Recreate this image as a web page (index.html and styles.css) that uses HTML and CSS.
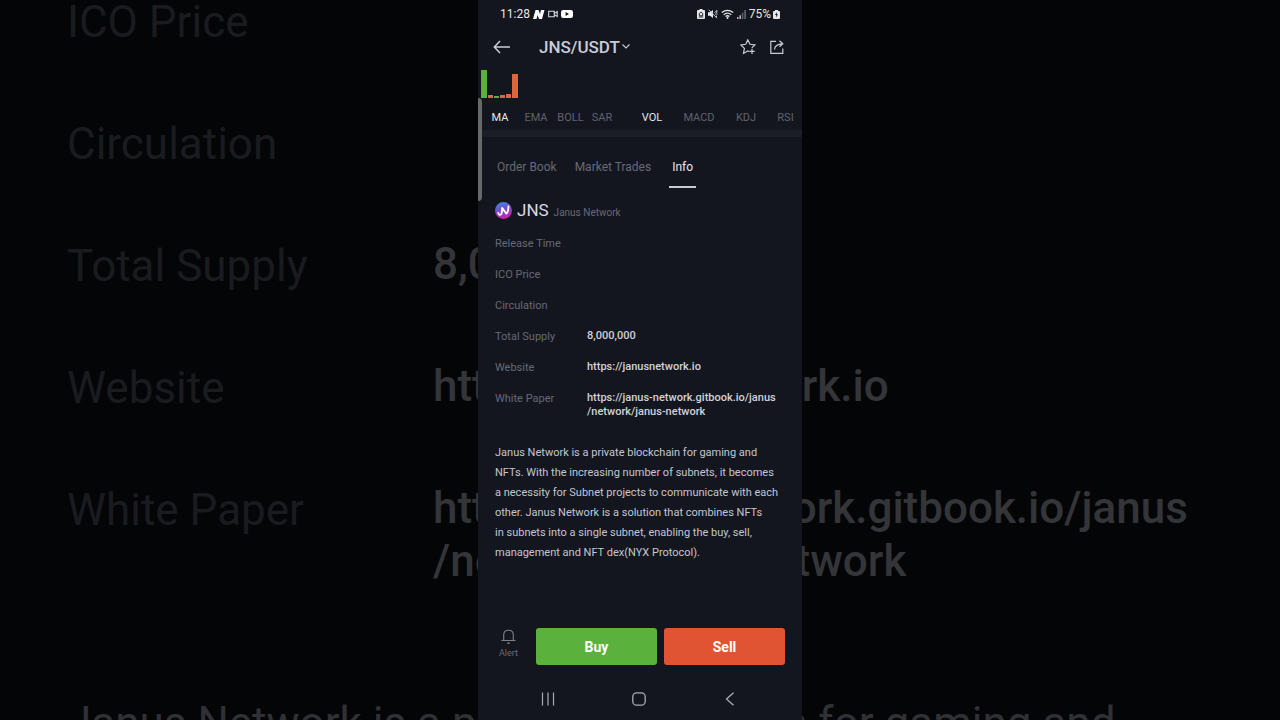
FILE: index.html
```html
<!DOCTYPE html>
<html lang="en">
<head>
  <meta charset="UTF-8">
  <meta name="viewport" content="width=device-width, initial-scale=1.0">
  <title>JNS/USDT</title>
  <link rel="stylesheet" href="styles.css">
</head>
<body>
  <!-- Enlarged backdrop behind the phone -->
  <div class="backdrop" aria-hidden="true">
    <div class="backdrop-row"><span>ICO Price</span></div>
    <div class="backdrop-row"><span>Circulation</span></div>
    <div class="backdrop-row"><span>Total Supply</span><b>8,000,000</b></div>
    <div class="backdrop-row"><span>Website</span><b>https://janusnetwork.io</b></div>
    <div class="backdrop-row backdrop-tall"><span>White Paper</span><b>https://janus-network.gitbook.io/janus<br>/network/janus-network</b></div>
    <div class="backdrop-text">Janus Network is a private blockchain for gaming and</div>
  </div>

  <main class="phone">
    <div class="scroll-thumb"></div>

    <!-- Status bar -->
    <div class="status-bar">
      <span class="clock">11:28</span>
      <svg width="12" height="10" viewBox="0 0 12 10"><path d="M0 10 2.500 1h3l1.500 4L8 1h3.500L9 10H6L4.500 6 3.500 10z" fill="#fff"/></svg>
      <svg width="10" height="8" viewBox="0 0 10 8"><path d="M.7 1.200h5.600v5.600H.7zM6.500 3.400 9.200 1.600v4.800L6.500 4.600" fill="none" stroke="#d5d8df" stroke-width="1.100"/></svg>
      <svg width="12" height="8" viewBox="0 0 12 8"><rect width="12" height="8" rx="2.200" fill="#fff"/><path d="M4.600 2v4L8 4z" fill="#14161f"/></svg>
      <span class="spacer"></span>
      <svg width="8" height="10" viewBox="0 0 8 10"><path d="M2.500 0h3v1H7q1 0 1 1v7q0 1-1 1H1q-1 0-1-1V2q0-1 1-1h1.500z" fill="#e4e6ea"/><path d="M2.300 6.800V4.500L4 3l1.700 1.500v2.300zM1.800 8h4.400" fill="none" stroke="#14161f" stroke-width=".9"/></svg>
      <svg width="10" height="10" viewBox="0 0 10 10"><path d="M0 3.300h2L5 1v8L2 6.700H0z" fill="#e4e6ea"/><path d="M.8.800 9 9.200M6.500 3.500l2-1.500M7 5h2.500M8.800 1v3M8.500 6.500v2" fill="none" stroke="#c5c8d0"/></svg>
      <svg width="13" height="10" viewBox="0 0 13 10"><path d="M.8 3.600Q6.500-1 12.200 3.600M2.700 5.700q3.800-3 7.600 0M4.600 7.500q1.900-1.500 3.800 0" fill="none" stroke="#e4e6ea" stroke-width="1.300"/><circle cx="6.500" cy="8.900" r="1" fill="#e4e6ea"/></svg>
      <svg width="9" height="9" viewBox="0 0 9 9"><path d="M0 9V7h1.600v2zM2.400 9V5.200H4V9z" fill="#aeb1b9"/><path d="M4.800 9V2.800h1.600V9zM7.200 9V0H9v9z" fill="#5b5e67"/></svg>
      <span class="battery">75%
        <svg width="7" height="9" viewBox="0 0 7 9"><path d="M2 0h3v1h1q1 0 1 1v6q0 1-1 1H1Q0 9 0 8V2q0-1 1-1h1z" fill="#e4e6ea"/><path d="m4 2-2 3h1.300L3 7.500 5 4.300H3.700z" fill="#14161f"/></svg>
      </span>
    </div>

    <!-- Header -->
    <header class="header">
      <button class="icon-button" aria-label="Back">
        <svg width="18" height="14" viewBox="0 0 18 14"><path d="M17 7H1.500M7 1 1.300 7 7 13" fill="none" stroke="#c9ccd6" stroke-width="1.500"/></svg>
      </button>
      <button class="pair">JNS/USDT
        <svg width="8" height="5" viewBox="0 0 8 5"><path d="m.5.500 3.500 3.500L7.500.500" fill="none" stroke="#c9ccd6" stroke-width="1.100"/></svg>
      </button>
      <span class="spacer"></span>
      <button class="icon-button" aria-label="Add to favorites">
        <svg width="16" height="16" viewBox="0 0 16 16"><path d="M9 12.600 7.800 12l-4.300 2.400.9-5L.9 6l4.800-.7L7.800.900 10 5.300l4.800.7-3 2.900M12 9.700v5.400M9.400 12.400h5.300" fill="none" stroke="#c9ccd6" stroke-width="1.200"/></svg>
      </button>
      <button class="icon-button" aria-label="Share">
        <svg width="14" height="14" viewBox="0 0 14 14"><path d="M6 1.300H.8v12h12V8.500M4.500 9.500q.3-5.500 8-5.700M9.500.8l3.300 3-3.300 3" fill="none" stroke="#c9ccd6" stroke-width="1.200"/></svg>
      </button>
    </header>

    <!-- Volume bars -->
    <div class="volume">
      <i class="up" style="height: 28px"></i>
      <i style="height: 3px"></i>
      <i class="up" style="height: 2px"></i>
      <i style="height: 3px"></i>
      <i style="height: 4px"></i>
      <i style="height: 24px"></i>
    </div>

    <nav class="indicators">
      <div class="indicator-main">
        <button class="active">MA</button>
        <button>EMA</button>
        <button>BOLL</button>
        <button>SAR</button>
      </div>
      <div class="indicator-sub">
        <button class="active">VOL</button>
        <button>MACD</button>
        <button>KDJ</button>
        <button>RSI</button>
      </div>
    </nav>

    <nav class="tabs">
      <button>Order Book</button>
      <button>Market Trades</button>
      <button class="active">Info</button>
    </nav>

    <!-- Coin info -->
    <section class="info">
      <div class="coin">
        <svg width="17" height="17" viewBox="0 0 17 17">
          <defs>
            <linearGradient id="coin-fill" x1=".3" y1="0" x2=".6" y2="1">
              <stop offset="0" stop-color="#3f86e0"/>
              <stop offset=".5" stop-color="#8045c8"/>
              <stop offset="1" stop-color="#d61fa8"/>
            </linearGradient>
          </defs>
          <circle cx="8.500" cy="8.500" r="8.500" fill="url(#coin-fill)"/>
          <path d="M3.200 11q1.200 3 3 1.200Q7 11 7.200 6l4 5.500q2-.5 2.300-7" fill="none" stroke="#fff" stroke-width="1.900" stroke-linejoin="round" stroke-linecap="round"/>
        </svg>
        <h1>JNS</h1>
        <span>Janus Network</span>
      </div>
      <dl class="details">
        <dt>Release Time</dt><dd></dd>
        <dt>ICO Price</dt><dd></dd>
        <dt>Circulation</dt><dd></dd>
        <dt>Total Supply</dt><dd>8,000,000</dd>
        <dt>Website</dt><dd><a href="https://janusnetwork.io">https://janusnetwork.io</a></dd>
        <dt>White Paper</dt><dd><a href="https://janus-network.gitbook.io/janus/network/janus-network">https://janus-network.gitbook.io/janus<wbr>/network/janus-network</a></dd>
      </dl>
      <p class="about">Janus Network is a private blockchain for gaming and NFTs. With the increasing number of subnets, it becomes a&nbsp;necessity for Subnet projects to communicate with each other. Janus Network is a solution that combines NFTs in&nbsp;subnets into a single subnet, enabling the buy, sell, management and NFT dex(NYX Protocol).</p>
    </section>

    <footer class="actions">
      <button class="alert">
        <svg width="15" height="16" viewBox="0 0 15 16"><path d="M.5 11.500h14M2.700 11.500V6q0-4.700 4.800-4.700T12.300 6v5.500" fill="none" stroke="#7d808a" stroke-width="1.100"/><path d="M6 13.500h3q-.2 1.500-1.500 1.500T6 13.500z" fill="#7d808a"/></svg>
        Alert
      </button>
      <button class="trade buy">Buy</button>
      <button class="trade sell">Sell</button>
    </footer>

    <!-- System navigation -->
    <nav class="system-nav">
      <button aria-label="Recent apps"><svg width="14" height="14" viewBox="0 0 14 14"><path d="M1.500.500v13M7 .5v13M12.500.500v13" stroke="#a9acb5" stroke-width="1.200"/></svg></button>
      <button aria-label="Home"><svg width="14" height="14" viewBox="0 0 14 14"><rect x=".8" y=".8" width="12.400" height="12.400" rx="3.800" fill="none" stroke="#a9acb5" stroke-width="1.300"/></svg></button>
      <button aria-label="Back"><svg width="14" height="14" viewBox="0 0 14 14"><path d="M10.500.700 3.500 7l7 6.300" fill="none" stroke="#a9acb5" stroke-width="1.300"/></svg></button>
    </nav>
  </main>
</body>
</html>
```
FILE: styles.css
```css
* {
  box-sizing: border-box;
}

body {
  margin: 0;
  min-height: 100vh;
  position: relative;
  overflow: hidden;
  background: #040507;
  color: #c9ccd6;
  font-family: Roboto, sans-serif;
  font-size: 11px;
}

button {
  padding: 0;
  border: none;
  background: none;
  color: inherit;
  font: inherit;
  cursor: pointer;
}

svg {
  display: block;
  flex: none;
}

/* Backdrop */
.backdrop {
  position: absolute;
  inset: -6px 0 0;
  padding-left: 67px;
  overflow: hidden;
  color: #1a1b1f;
  font-size: 44px;
  line-height: 57px;
  white-space: nowrap;
}

.backdrop-row {
  display: grid;
  grid-template-columns: 366px 1fr;
  height: 122px;
}

.backdrop-tall {
  height: 213px;
}

.backdrop-row b {
  color: #343538;
  font-weight: 500;
  line-height: 53px;
}

.backdrop-text {
  color: #303134;
}

/* Phone */
.phone {
  position: relative;
  display: flex;
  flex-direction: column;
  width: 100%;
  max-width: 324px;
  min-height: 100vh;
  margin: 0 auto;
  background: #14161f;
}

.scroll-thumb {
  position: absolute;
  top: 98px;
  left: 0;
  width: 4px;
  height: 103px;
  border-radius: 0 4px 4px 0;
  background: #66686c;
}

.spacer {
  flex: 1;
}

.status-bar {
  display: flex;
  align-items: center;
  gap: 3px;
  height: 28px;
  padding: 0 22px;
  color: #e4e6ea;
  font-size: 12px;
}

.battery {
  display: flex;
  align-items: center;
  gap: 2px;
}

.header {
  display: flex;
  align-items: center;
  gap: 14px;
  height: 37px;
  padding: 0 18px 0 15px;
}

.pair {
  display: flex;
  align-items: center;
  gap: 2px;
  margin-left: 14px;
  font-size: 17px;
  font-weight: 500;
}

/* Chart */
.volume {
  display: flex;
  align-items: flex-end;
  gap: 1px;
  height: 33px;
  padding-left: 3px;
}

.volume i {
  width: 5px;
  background: #e0643f;
}

.volume .up {
  background: #5ab13c;
}

.volume i:first-child,
.volume i:last-child {
  width: 6px;
}

.indicators {
  display: flex;
  justify-content: space-between;
  height: 39px;
  padding: 0 0 0 4px;
  border-bottom: 7px solid #1b1e27;
  color: #5f626d;
}

.indicators div {
  display: grid;
  padding-top: 6px;
}

.indicator-main {
  grid-template-columns: 36px 36px 33px 30px;
}

.indicator-sub {
  grid-template-columns: 46px 48px 46px 33px;
}

.indicators .active,
.tabs .active {
  color: #e4e6ea;
}

.tabs {
  display: flex;
  gap: 18px;
  height: 51px;
  padding: 0 19px;
  color: #666974;
  font-size: 12px;
}

.tabs button {
  padding-top: 11px;
  border-bottom: 2px solid transparent;
}

.tabs .active {
  padding-right: 3px;
  padding-left: 3px;
  border-color: #c9ccd6;
}

/* Info */
.info {
  flex: 1;
  padding: 11px 17px 0;
}

.coin {
  display: flex;
  align-items: center;
  gap: 5px;
  height: 22px;
  color: #666974;
}

.coin h1 {
  margin: 0;
  color: #d8dae2;
  font-size: 17px;
  font-weight: 400;
}

.coin span {
  padding-top: 5px;
  font-size: 10px;
}

.details {
  display: grid;
  grid-template-columns: 92px 1fr;
  row-gap: 16px;
  margin: 15px 0 0;
  line-height: 14px;
}

.details dt {
  padding-top: 1px;
  color: #666974;
}

.details dd {
  margin: 0;
  color: #d0d2da;
  font-weight: 500;
}

.details a {
  color: inherit;
  text-decoration: none;
}

.about {
  margin: 24px 0 0;
  color: #c3c6cf;
  line-height: 20px;
}

/* Bottom buttons */
.actions {
  display: flex;
  gap: 7px;
  padding: 0 17px;
}

.alert {
  display: flex;
  flex-direction: column;
  align-items: center;
  gap: 3px;
  width: 27px;
  margin-right: 7px;
  padding-top: 1px;
  color: #666974;
  font-size: 9px;
}

.trade {
  flex: 1;
  height: 37px;
  border-radius: 3px;
  color: #fff;
  font-size: 14px;
  font-weight: 700;
}

.buy {
  background: #5ab13c;
}

.sell {
  background: #e05434;
}

.system-nav {
  display: flex;
  justify-content: space-between;
  align-items: center;
  height: 55px;
  padding: 13px 65px 0 63px;
}
```
